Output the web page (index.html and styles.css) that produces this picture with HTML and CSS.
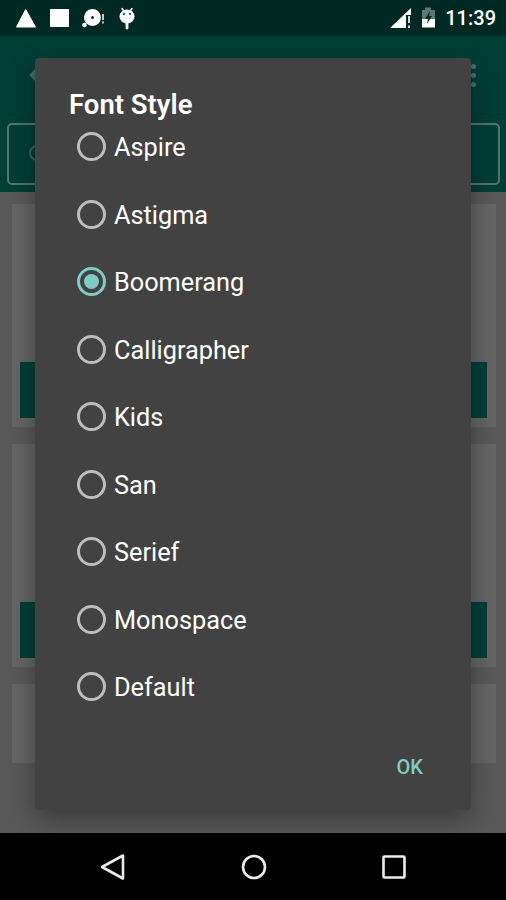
FILE: index.html
```html
<!DOCTYPE html>
<html lang="en">
<head>
    <meta charset="UTF-8">
    <meta name="viewport" content="width=device-width, initial-scale=1.0">
    <title>Font Style</title>
    <link rel="stylesheet" href="styles.css">
</head>
<body>
    <div class="status-bar">
        <svg class="status-left" width="150" height="36" viewBox="0 0 150 36" fill="#fff">
            <path d="M25.700 9.500L35.500 27H16.500Z" stroke="#fff" stroke-width="1" stroke-linejoin="round"/>
            <rect x="50" y="9" width="19" height="18"/>
            <circle cx="92.500" cy="17.500" r="8.500"/>
            <circle cx="84.500" cy="25" r="2.300"/>
            <circle cx="92.500" cy="17.500" r="1.500" fill="#003a34"/>
            <path d="M102 14h2v6h-2zM102 21.500h2v2h-2z" opacity=".75"/>
            <path d="M122 8.500l3 4M132 8.500l-3 4" stroke="#fff" stroke-width="1.500" stroke-linecap="round"/>
            <path d="M127 21v7" stroke="#fff" stroke-width="2.800" stroke-linecap="round"/>
            <ellipse cx="127" cy="16.500" rx="7.500" ry="7"/>
            <circle cx="124" cy="14" r="1" fill="#002a24"/>
            <circle cx="130" cy="14" r="1" fill="#002a24"/>
        </svg>
        <svg class="status-right" width="50" height="36" viewBox="0 0 50 36">
            <path d="M3 28L24 8v7h-5v13Z" fill="#fff"/>
            <path d="M21 16h2v7h-2zM21 25.500h2v2.500h-2z" fill="#d5dddb"/>
            <path d="M35 10h3V7.500h6V10h4v10H35Z" fill="#5d7773"/>
            <path d="M35 19h13v8.500H35Z" fill="#fff"/>
            <path d="M43 11l-5 8h3l-1 5 5-8h-3Z" fill="#002a24"/>
        </svg>
        <span class="clock">11:39</span>
    </div>

    <div class="toolbar">
        <svg width="24" height="24" viewBox="0 0 24 24" fill="#3c6f69"><path d="M0 12l9-9v7h15v4H9v7Z"/></svg>
        <div class="menu-dots"><i></i><i></i><i></i></div>
    </div>

    <div class="search-bar">
        <div class="search-box">
            <svg width="22" height="22" viewBox="0 0 22 22" fill="none" stroke="#39635d" stroke-width="2"><circle cx="8" cy="8" r="7"/><path d="M13 13l8 8"/></svg>
        </div>
    </div>

    <div class="content">
        <div class="card"><div class="card-button"></div></div>
        <div class="card"><div class="card-button"></div></div>
        <div class="card card-short"></div>
    </div>

    <div class="nav-bar">
        <svg width="28" height="30" viewBox="0 0 28 30"><path d="M3 15L24 3.500v23Z"/></svg>
        <svg width="28" height="30" viewBox="0 0 28 30"><circle cx="14" cy="15" r="11"/></svg>
        <svg width="28" height="30" viewBox="0 0 28 30"><rect x="3.500" y="4.500" width="21" height="21" rx="1"/></svg>
    </div>

    <div class="dialog">
        <h3>Font Style</h3>
        <div class="options">
            <div class="option"><span class="radio"></span>Aspire</div>
            <div class="option"><span class="radio"></span>Astigma</div>
            <div class="option"><span class="radio selected"></span>Boomerang</div>
            <div class="option"><span class="radio"></span>Calligrapher</div>
            <div class="option"><span class="radio"></span>Kids</div>
            <div class="option"><span class="radio"></span>San</div>
            <div class="option"><span class="radio"></span>Serief</div>
            <div class="option"><span class="radio"></span>Monospace</div>
            <div class="option"><span class="radio"></span>Default</div>
        </div>
        <div class="actions"><span class="ok-button">OK</span></div>
    </div>
</body>
</html>
```
FILE: styles.css
```css
* {
    margin: 0;
    padding: 0;
    box-sizing: border-box;
    font-family: Roboto, sans-serif;
}

body {
    display: flex;
    flex-direction: column;
    height: 900px;
    overflow: hidden;
    background-color: #595959;
    position: relative;
}

.status-bar {
    height: 36px;
    background-color: #002923;
    display: flex;
    align-items: center;
    padding-right: 10px;
}

.status-right {
    margin-left: auto;
}

.clock {
    padding-left: 8px;
    font-size: 20px;
    line-height: 36px;
    font-weight: 500;
    color: #fff;
}

.toolbar {
    height: 78px;
    background-color: #003e36;
    display: flex;
    justify-content: space-between;
    align-items: center;
    padding: 0 30px 0 29px;
}

.menu-dots {
    display: flex;
    flex-direction: column;
    gap: 4px;
}

.menu-dots i {
    width: 5px;
    height: 5px;
    border-radius: 50%;
    background-color: #47736e;
}

.search-bar {
    height: 78px;
    padding: 8px 6px 7px 7px;
    background-color: #003e36;
    border-top: 1px solid #00362f;
}

.search-box {
    height: 62px;
    border: 2px solid #55736f;
    border-radius: 5px;
    padding: 20px;
}

.content {
    flex: 1;
    display: flex;
    flex-direction: column;
    gap: 17px;
    padding: 12px 10px 0 12px;
}

.card {
    height: 223px;
    display: flex;
    align-items: flex-end;
    padding: 9px 9px 9px 8px;
    background-color: #656565;
}

.card-button {
    flex: 1;
    height: 56px;
    background-color: #003f36;
}

.card-short {
    height: 79px;
}

.nav-bar {
    height: 67px;
    background-color: #000;
    display: flex;
    justify-content: space-between;
    align-items: center;
    padding: 0 98px 0 99px;
}

.nav-bar svg {
    fill: none;
    stroke: #ececec;
    stroke-width: 2.600;
    stroke-linejoin: round;
}

.dialog {
    position: absolute;
    left: 35px;
    top: 58px;
    width: 436px;
    height: 752px;
    padding: 29px 34px 28px;
    border-radius: 4px;
    background-color: #424242;
    box-shadow: 0 9px 26px rgba(0, 0, 0, 0.36);
    color: #fff;
    display: flex;
    flex-direction: column;
}

.dialog h3 {
    font-size: 27.500px;
    line-height: 36px;
    font-weight: 600;
}

.option {
    height: 67.500px;
    display: flex;
    align-items: flex-start;
    gap: 8px;
    padding-left: 8px;
    font-size: 25.300px;
    line-height: 50px;
}

.radio {
    width: 29px;
    height: 29px;
    margin-top: 9px;
    border: 3px solid #bdbdbd;
    border-radius: 50%;
}

.radio.selected {
    border-color: #80cbc4;
    padding: 4px;
    background: #80cbc4 content-box;
}

.actions {
    display: flex;
    justify-content: flex-end;
    margin-top: auto;
    padding-right: 14px;
}

.ok-button {
    font-size: 20px;
    line-height: 30px;
    font-weight: 500;
    color: #80cbc4;
}
```
